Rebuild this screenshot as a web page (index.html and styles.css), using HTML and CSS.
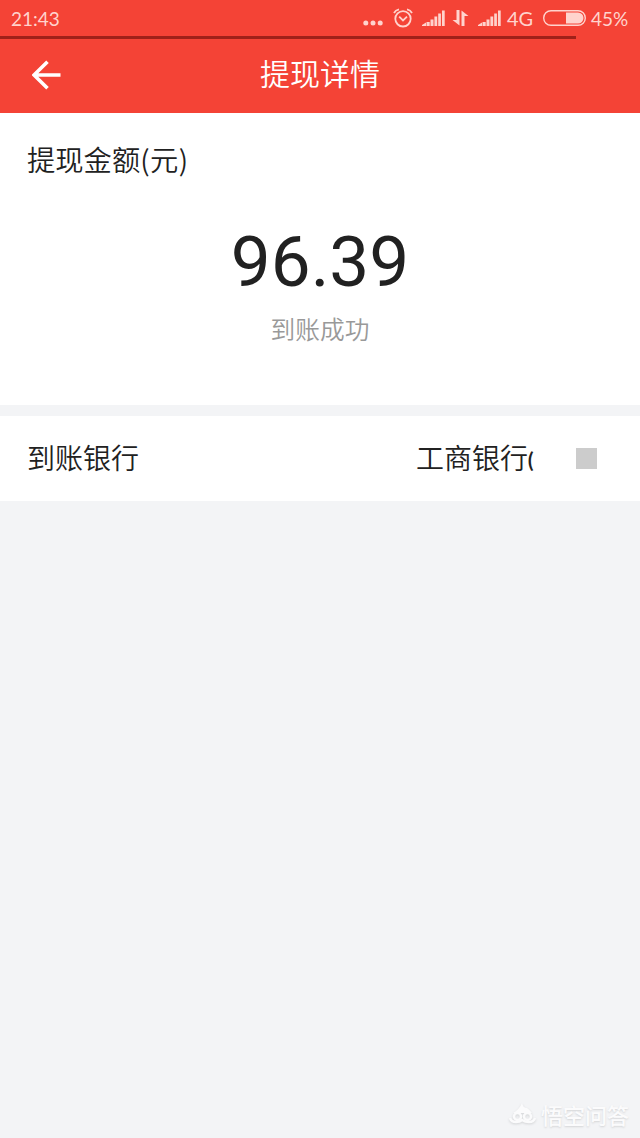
FILE: index.html
```html
<!DOCTYPE html>
<html lang="zh-CN">

<head>
  <meta charset="UTF-8">
  <title>提现详情</title>
  <link rel="stylesheet" href="styles.css">
</head>

<body>

  <!-- 状态栏 -->
  <div class="status">
    <span class="time">21:43</span>
    <svg class="dots" width="20" height="6" viewBox="0 0 20 6">
      <circle cx="2.8" cy="3" r="2.5"/>
      <circle cx="10" cy="3" r="2.5"/>
      <circle cx="17.2" cy="3" r="2.5"/>
    </svg>
    <svg class="alarm" width="20" height="20" viewBox="0 0 20 20">
      <circle cx="10" cy="10.8" r="7.7"/>
      <path d="M6.2 8.6l3.800 3.800 4-3.800M1 5q1.500-3 5-3.700M19 5q-1.500-3-5-3.700"/>
    </svg>
    <svg class="signal" width="23" height="16" viewBox="0 0 23 16">
      <path d="M0 16v-1l4-2.500v3.500zM4.500 12h3.200v4H4.500zM8.500 9.500h3V16h-3zM12.400 6.500h2.800V16h-2.800zM16.200 3.500h2.700V16h-2.700zM20 0.500h2.700V16H20z"/>
    </svg>
    <svg class="data" width="17" height="16" viewBox="0 0 17 16">
      <path d="M4.500 0h3v15.500L0.500 10h4zM9.500 0.500L16.500 6h-4v10h-3z"/>
    </svg>
    <svg class="signal" width="23" height="16" viewBox="0 0 23 16">
      <path d="M0 16v-1l4-2.500v3.500zM4.500 12h3.200v4H4.500zM8.500 9.500h3V16h-3zM12.400 6.500h2.800V16h-2.800zM16.200 3.500h2.700V16h-2.700zM20 0.500h2.700V16H20z"/>
    </svg>
    <span class="net">4G</span>
    <svg class="battery" width="43" height="16" viewBox="0 0 43 16">
      <rect x="0.700" y="0.700" width="41.600" height="14.600" rx="7.300"/>
      <path d="M23 2.500h12a5.500 5.500 0 0 1 0 11H23z"/>
    </svg>
    <span class="percent">45%</span>
  </div>

  <!-- 加载进度 -->
  <div class="progress"></div>

  <!-- 标题栏 -->
  <div class="header">
    <svg class="back" width="30" height="30" viewBox="0 0 30 30">
      <path d="M28.500 15H2M15.500 1.800L2 15l13.500 13.200"/>
    </svg>
    <div class="title">提现详情</div>
  </div>

  <!-- 提现金额 -->
  <div class="card">
    <div class="label">提现金额<span class="unit">(元)</span></div>
    <div class="amount">96.39</div>
    <div class="result">到账成功</div>
  </div>

  <!-- 到账银行 -->
  <div class="row">
    <div class="name">到账银行</div>
    <div class="bank">工商银行<span class="paren">(</span></div>
    <div class="block"></div>
  </div>

  <!-- 水印 -->
  <div class="watermark">
    <svg width="28" height="24" viewBox="0 0 28 24">
      <path class="hair" d="M4 11Q10 8 13 1q1 5 5 5 3 2 5 5z"/>
      <circle cx="8.500" cy="14.500" r="3.500"/>
      <circle cx="18.500" cy="14.500" r="3.500"/>
      <path d="M1 16q1 4 6 4 4 0 6-2 3 2 7 2 5 0 6-4"/>
    </svg>
    <span>悟空问答</span>
  </div>

</body>

</html>
```

FILE: styles.css
```css
body {
  margin: 0;
  height: 1138px;
  display: flex;
  flex-direction: column;
  background-color: #f3f4f6;
  color: #212121;
  font-family: "Noto Sans CJK SC", sans-serif;
  font-weight: 350;
  overflow: hidden;
}

/* 状态栏 */
.status {
  display: flex;
  align-items: center;
  height: 36px;
  box-sizing: border-box;
  padding: 0 11px;
  background-color: #f44336;
  color: #ffd3cd;
  font-family: Lato, sans-serif;
  font-size: 19px;
  font-weight: 400;
  line-height: 38px;
}

.status svg {
  flex: none;
  fill: #ffd3cd;
}

.time {
  flex: none;
  width: 352px;
  padding-top: 1px;
}

.dots {
  margin-top: 10px;
}

.status .alarm {
  margin-left: 10px;
  margin-top: -1px;
  fill: none;
  stroke: #ffd3cd;
  stroke-width: 1.8;
}

.signal {
  margin-left: 9px;
}

.data {
  margin-left: 7px;
}

.net {
  flex: none;
  width: 29px;
  margin-left: 6px;
  font-size: 20px;
}

.battery {
  margin-left: 7px;
}

.battery rect {
  fill: none;
  stroke: #ffd3cd;
  stroke-width: 1.4;
}

.percent {
  margin-left: 5px;
  padding-top: 1px;
}

.progress {
  height: 3px;
  background: linear-gradient(#9f2119, #9f2119) no-repeat #f44336;
  background-size: 576px 3px;
}

/* 标题栏 */
.header {
  display: flex;
  align-items: center;
  height: 74px;
  padding: 0 32px;
  background-color: #f44336;
  color: #fff;
}

.back {
  flex: none;
  margin-bottom: 3px;
  fill: none;
  stroke: #fff;
  stroke-width: 3.6;
}

.title {
  flex: 1;
  margin-right: 30px;
  padding-bottom: 8px;
  font-size: 30px;
  line-height: 66px;
  text-align: center;
}

/* 金额卡片 */
.card {
  height: 292px;
  box-sizing: border-box;
  padding: 25px 27px 0;
  background-color: #fff;
}

.label {
  font-size: 28.3px;
  line-height: 42px;
}

.unit {
  letter-spacing: 0.5px;
}

.amount {
  margin-top: 39px;
  font-family: Roboto, sans-serif;
  font-size: 71px;
  font-weight: 400;
  line-height: 86px;
  text-align: center;
}

.result {
  margin-top: 4px;
  color: #999;
  font-size: 24.7px;
  line-height: 38px;
  text-align: center;
}

/* 银行信息 */
.row {
  display: flex;
  align-items: center;
  height: 85px;
  box-sizing: border-box;
  margin-top: 11px;
  padding: 0 43px 0 27px;
  background-color: #fff;
  font-size: 28px;
  line-height: 42px;
}

.name,
.bank {
  margin-bottom: 3px;
}

.bank {
  width: 119px;
  margin-left: auto;
  white-space: nowrap;
}

.paren {
  margin-left: -1px;
  font-size: 19px;
  font-weight: 700;
  line-height: 1;
  vertical-align: 2px;
}

.block {
  width: 21px;
  height: 21px;
  margin-left: 41px;
  background-color: #ccc;
}

/* 右下角水印 */
.watermark {
  display: flex;
  align-items: center;
  justify-content: flex-end;
  gap: 4px;
  margin-top: auto;
  padding: 0 11px 8px 0;
  color: #fbfbfc;
  font-size: 22px;
  font-weight: 500;
  line-height: 32px;
  text-shadow: 0 1px 2px #d3d4d6;
}

.watermark svg {
  fill: none;
  stroke: #fbfbfc;
  stroke-width: 2.5;
  filter: drop-shadow(0 1px 1px #d3d4d6);
}

.watermark .hair {
  fill: #fbfbfc;
  stroke: none;
}
```
